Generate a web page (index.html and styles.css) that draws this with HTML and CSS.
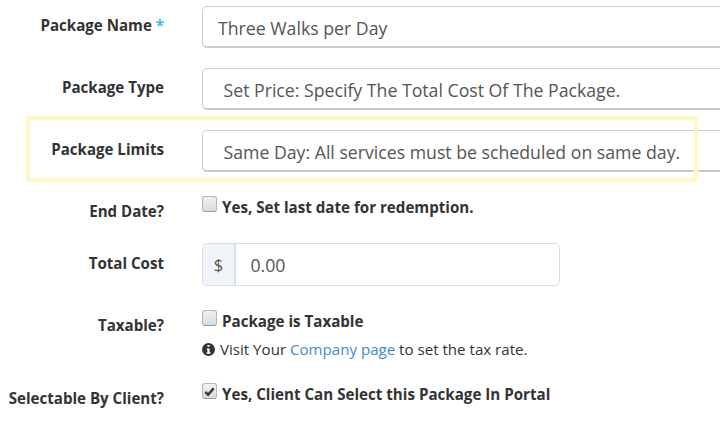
FILE: index.html
```html
<!DOCTYPE html>
<html lang="en">
<head>
<meta charset="utf-8">
<title>Package</title>
<link rel="stylesheet" href="styles.css">
</head>
<body>
<form class="form">
  <div class="row row-name">
    <label class="label">Package Name <span class="req">*</span></label>
    <div class="control"><div class="field field-text">Three Walks per Day</div></div>
  </div>
  <div class="row row-type">
    <label class="label">Package Type</label>
    <div class="control"><div class="field field-select">Set Price: Specify The Total Cost Of The Package.</div></div>
  </div>
  <div class="row row-limits">
    <span class="highlight"></span>
    <label class="label">Package Limits</label>
    <div class="control"><div class="field field-select">Same Day: All services must be scheduled on same day.</div></div>
  </div>
  <div class="row row-end">
    <label class="label label-check">End Date?</label>
    <div class="control check-line"><span class="box"></span><span class="check-text">Yes, Set last date for redemption.</span></div>
  </div>
  <div class="row row-cost">
    <label class="label label-cost">Total Cost</label>
    <div class="group"><span class="addon">$</span><span class="group-input">0.00</span></div>
  </div>
  <div class="row row-tax">
    <label class="label label-check">Taxable?</label>
    <div class="control">
      <div class="check-line"><span class="box"></span><span class="check-text">Package is Taxable</span></div>
      <p class="help">
        <svg class="info" viewBox="0 0 1536 1536" aria-hidden="true"><path d="M768 0a768 768 0 1 0 0 1536a768 768 0 0 0 0-1536zM640 224h256v224H640zM576 640h320v448h96v192H544v-192h96V832h-64z" fill-rule="evenodd"/></svg><span class="help-text">Visit Your <a href="#" class="link">Company page</a> to set the tax rate.</span>
      </p>
    </div>
  </div>
  <div class="row row-client">
    <label class="label label-check">Selectable By Client?</label>
    <div class="control check-line"><span class="box"><svg class="tick" viewBox="0 0 14 14" aria-hidden="true"><path d="M2.5 7.5 5.5 10.5 11.5 3.5" fill="none" stroke="#333" stroke-width="2.6"/></svg></span><span class="check-text">Yes, Client Can Select this Package In Portal</span></div>
  </div>
</form>
</body>
</html>
```
FILE: styles.css
```css
html, body {
  margin: 0;
  padding: 0;
  background: #fff;
}
body {
  width: 720px;
  height: 425px;
  overflow: hidden;
  font-family: "Open Sans", sans-serif;
  color: #333;
}
.form {
  display: flex;
  flex-direction: column;
  padding-top: 6px;
}
.row {
  display: flex;
  align-items: flex-start;
}
.label {
  flex: 0 0 164px;
  width: 164px;
  margin-right: 38px;
  padding-top: 9px;
  text-align: right;
  font-size: 15.1px;
  font-weight: 700;
  line-height: 20px;
  color: #333;
  white-space: nowrap;
}
.label-check { padding-top: 5px; }
.label-cost { padding-top: 10px; }
.req { color: #3bc0e8; }
.control { flex: 0 0 auto; }
.field {
  box-sizing: border-box;
  width: 560px;
  height: 42px;
  border: 1px solid #ccc;
  border-bottom-width: 2px;
  border-radius: 5px;
  background: #fff;
  font-size: 17.7px;
  line-height: 42px;
  color: #555;
  white-space: nowrap;
}
.field-text { padding-left: 15px; }
.field-select { padding-left: 20.5px; }
.row-type,
.row-limits { margin-top: 20px; }
.row-limits { position: relative; }
.highlight {
  position: absolute;
  z-index: 1;
  top: -14px;
  left: 26px;
  box-sizing: border-box;
  width: 672px;
  height: 66px;
  border: 4px solid #fff8c8;
  pointer-events: none;
}
.row-end { margin-top: 24px; }
.check-line {
  display: flex;
  align-items: flex-start;
  gap: 5px;
}
.box {
  box-sizing: border-box;
  flex: none;
  width: 15px;
  height: 16px;
  border: 1px solid #b5b5b5;
  border-bottom-color: #999;
  border-radius: 3px;
  background: linear-gradient(#f1f1f1, #dcdcdc);
  display: flex;
  align-items: center;
  justify-content: center;
}
.tick { width: 13px; height: 13px; }
.check-text {
  padding-top: 1px;
  font-size: 15.15px;
  font-weight: 700;
  line-height: 20px;
  color: #333;
  white-space: nowrap;
}
.row-cost { margin-top: 22px; }
.group {
  box-sizing: border-box;
  display: flex;
  width: 358px;
  height: 43px;
  border: 1px solid #d5dfec;
  border-radius: 5px;
  overflow: hidden;
}
.addon {
  box-sizing: border-box;
  flex: none;
  width: 33px;
  border-right: 2px solid #d5dfec;
  background: #f0f4f9;
  text-align: center;
  font-size: 16.5px;
  line-height: 41px;
  color: #555;
}
.group-input {
  padding-left: 14.5px;
  font-size: 17.7px;
  line-height: 43px;
  color: #555;
}
.row-tax { margin-top: 24px; }
.help {
  display: flex;
  align-items: center;
  gap: 5px;
  margin: 8px 0 0;
  font-size: 15.1px;
  line-height: 20px;
  color: #333;
  white-space: nowrap;
}
.info {
  flex: none;
  width: 13px;
  height: 13px;
  fill: #333;
}
.link { color: #428bca; text-decoration: none; }
.row-client { margin-top: 24px; }
```
